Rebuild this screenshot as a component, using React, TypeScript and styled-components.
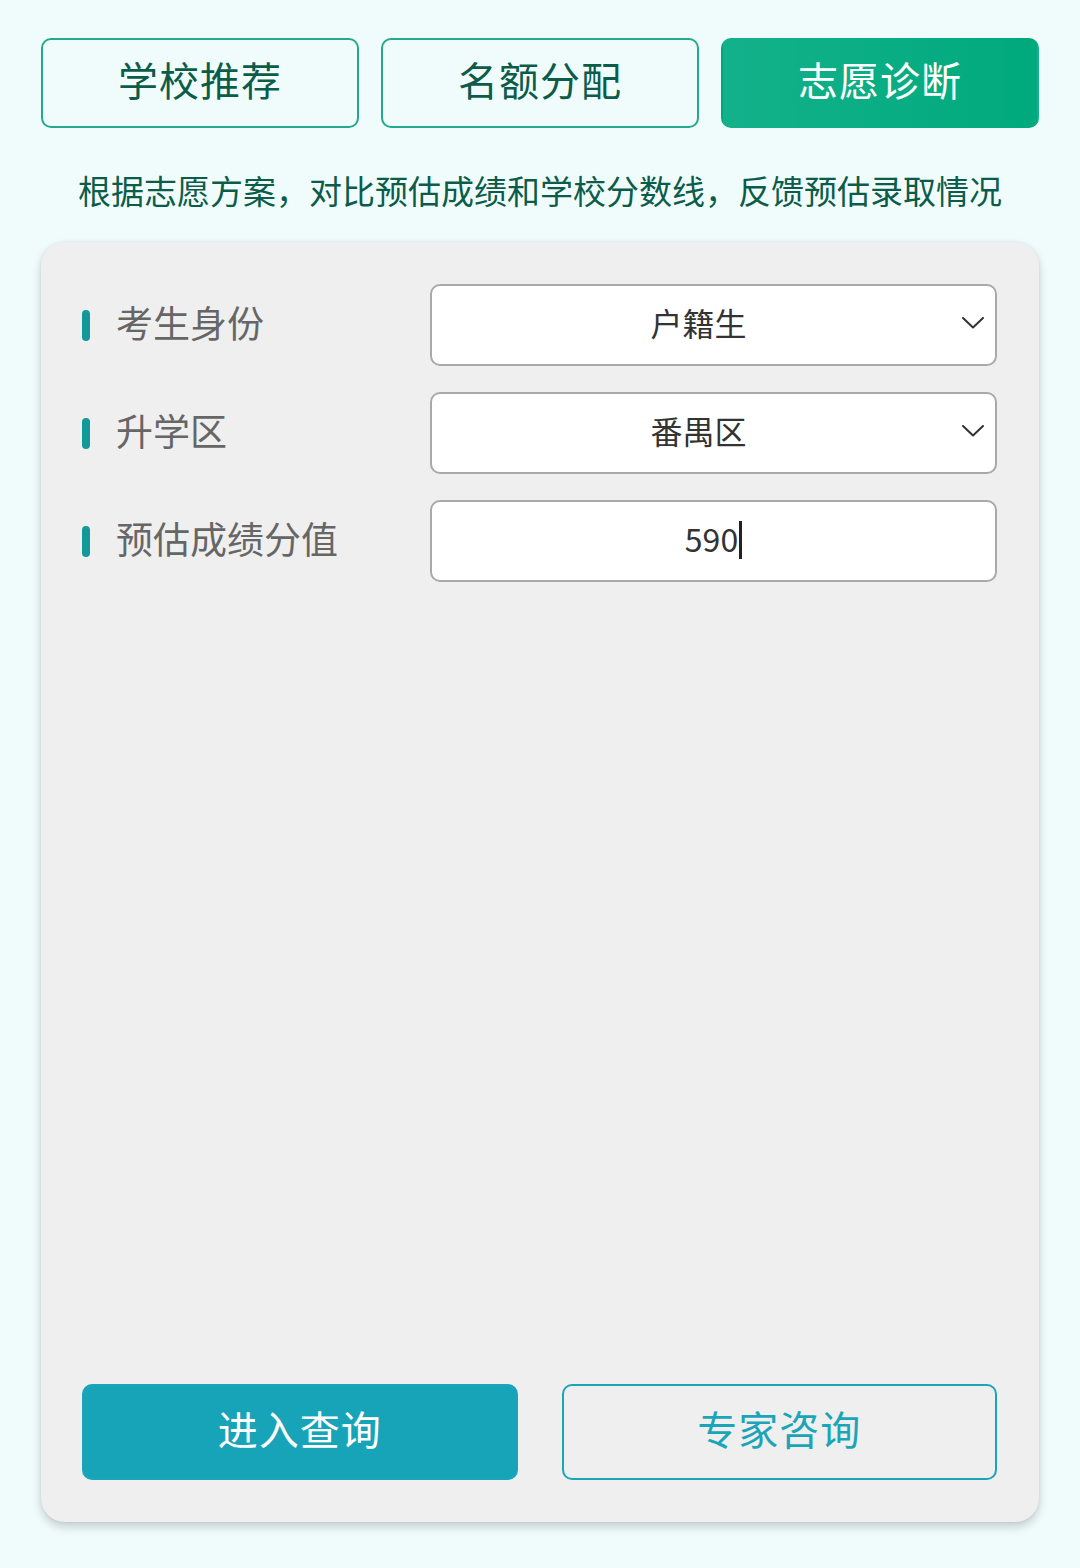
import React from 'react';
import styled, { createGlobalStyle } from 'styled-components';

const GlobalStyle = createGlobalStyle`
    html, body {
        margin: 0;
        padding: 0;
        background: #f0fcfc;
    }
    body {
        font-family: "Noto Sans CJK SC", "Noto Sans", sans-serif;
    }
`;

const Page = styled.div`
    width: 1080px;
    min-height: 1568px;
    box-sizing: border-box;
    padding: 38px 41px 0;
    background: #f0fcfc;
`;

const Tabs = styled.div`
    display: grid;
    grid-template-columns: repeat(3, 1fr);
    gap: 22px;
`;

const Tab = styled.div<{ $active?: boolean }>`
    height: 90px;
    box-sizing: border-box;
    padding-bottom: 8px;
    border-radius: 10px;
    border: 2px solid ${(p) => (p.$active ? 'transparent' : '#24a98c')};
    background: ${(p) => (p.$active ? 'linear-gradient(90deg, #13b18b, #00aa7c)' : '#f0fcfc')};
    color: ${(p) => (p.$active ? '#ffffff' : '#0c5c49')};
    font-size: 40px;
    display: flex;
    align-items: center;
    justify-content: center;
    letter-spacing: 1px;
`;

const Subtitle = styled.div`
    margin-top: 40px;
    padding-bottom: 4px;
    text-align: center;
    font-size: 33px;
    line-height: 44px;
    color: #0c5c49;
`;

const Card = styled.div`
    margin-top: 26px;
    height: 1280px;
    box-sizing: border-box;
    padding: 42px 42px 42px 41px;
    background: #efefef;
    border-radius: 24px;
    box-shadow: 0 5px 10px rgba(0, 0, 0, 0.18), 0 0 4px rgba(0, 0, 0, 0.06);
    display: flex;
    flex-direction: column;
`;

const Rows = styled.div`
    display: flex;
    flex-direction: column;
    gap: 26px;
`;

const Row = styled.div`
    display: grid;
    grid-template-columns: 348px 1fr;
    align-items: center;
`;

const Label = styled.div`
    display: flex;
    align-items: center;
    gap: 26px;
    font-size: 37px;
    color: #666666;
`;

const LabelText = styled.span`
    padding-bottom: 7px;
`;

const Bar = styled.span`
    width: 8px;
    height: 31px;
    border-radius: 4px;
    background: #13999a;
`;

const Field = styled.div`
    position: relative;
    height: 82px;
    box-sizing: border-box;
    border: 2px solid #a9a9a9;
    border-radius: 10px;
    background: #ffffff;
    display: flex;
    align-items: center;
    justify-content: center;
    font-size: 32px;
    color: #333333;
`;

const FieldText = styled.span<{ $shift?: number }>`
    margin-right: ${(p) => p.$shift ?? 0}px;
    padding-bottom: 6px;
    display: flex;
    align-items: center;
`;

const Chevron = styled.svg`
    position: absolute;
    right: 11px;
    top: 50%;
    margin-top: -8px;
`;

const Caret = styled.span`
    display: inline-block;
    width: 3px;
    height: 38px;
    margin-left: 1px;
    margin-top: 4px;
    background: #222222;
`;

const Spacer = styled.div`
    flex: 1;
`;

const Actions = styled.div`
    display: grid;
    grid-template-columns: 1fr 1fr;
    gap: 44px;
`;

const ActionButton = styled.div<{ $primary?: boolean }>`
    height: 96px;
    box-sizing: border-box;
    padding-bottom: 8px;
    border-radius: 10px;
    border: 2px solid #1ba5b8;
    background: ${(p) => (p.$primary ? '#18a4b8' : 'transparent')};
    color: ${(p) => (p.$primary ? '#ffffff' : '#1ba5b8')};
    font-size: 40px;
    display: flex;
    align-items: center;
    justify-content: center;
    letter-spacing: 1px;
`;

const ChevronIcon = () => (
    <Chevron width='22' height='12' viewBox='0 0 22 12'>
        <path d='M1 1 L11 10.5 L21 1' fill='none' stroke='#333' strokeWidth='2' strokeLinecap='round' strokeLinejoin='round' />
    </Chevron>
);

const tabs = ['学校推荐', '名额分配', '志愿诊断'];

export default function App(): JSX.Element {
    return (
        <>
            <GlobalStyle />
            <Page>
                <Tabs>
                    {tabs.map((t, i) => (
                        <Tab key={t} $active={i === 2}>{t}</Tab>
                    ))}
                </Tabs>
                <Subtitle>根据志愿方案，对比预估成绩和学校分数线，反馈预估录取情况</Subtitle>
                <Card>
                    <Rows>
                        <Row>
                            <Label><Bar /><LabelText>考生身份</LabelText></Label>
                            <Field>
                                <FieldText $shift={30}>户籍生</FieldText>
                                <ChevronIcon />
                            </Field>
                        </Row>
                        <Row>
                            <Label><Bar /><LabelText>升学区</LabelText></Label>
                            <Field>
                                <FieldText $shift={30}>番禺区</FieldText>
                                <ChevronIcon />
                            </Field>
                        </Row>
                        <Row>
                            <Label><Bar /><LabelText>预估成绩分值</LabelText></Label>
                            <Field>
                                <FieldText>590<Caret /></FieldText>
                            </Field>
                        </Row>
                    </Rows>
                    <Spacer />
                    <Actions>
                        <ActionButton $primary>进入查询</ActionButton>
                        <ActionButton>专家咨询</ActionButton>
                    </Actions>
                </Card>
            </Page>
        </>
    );
}
